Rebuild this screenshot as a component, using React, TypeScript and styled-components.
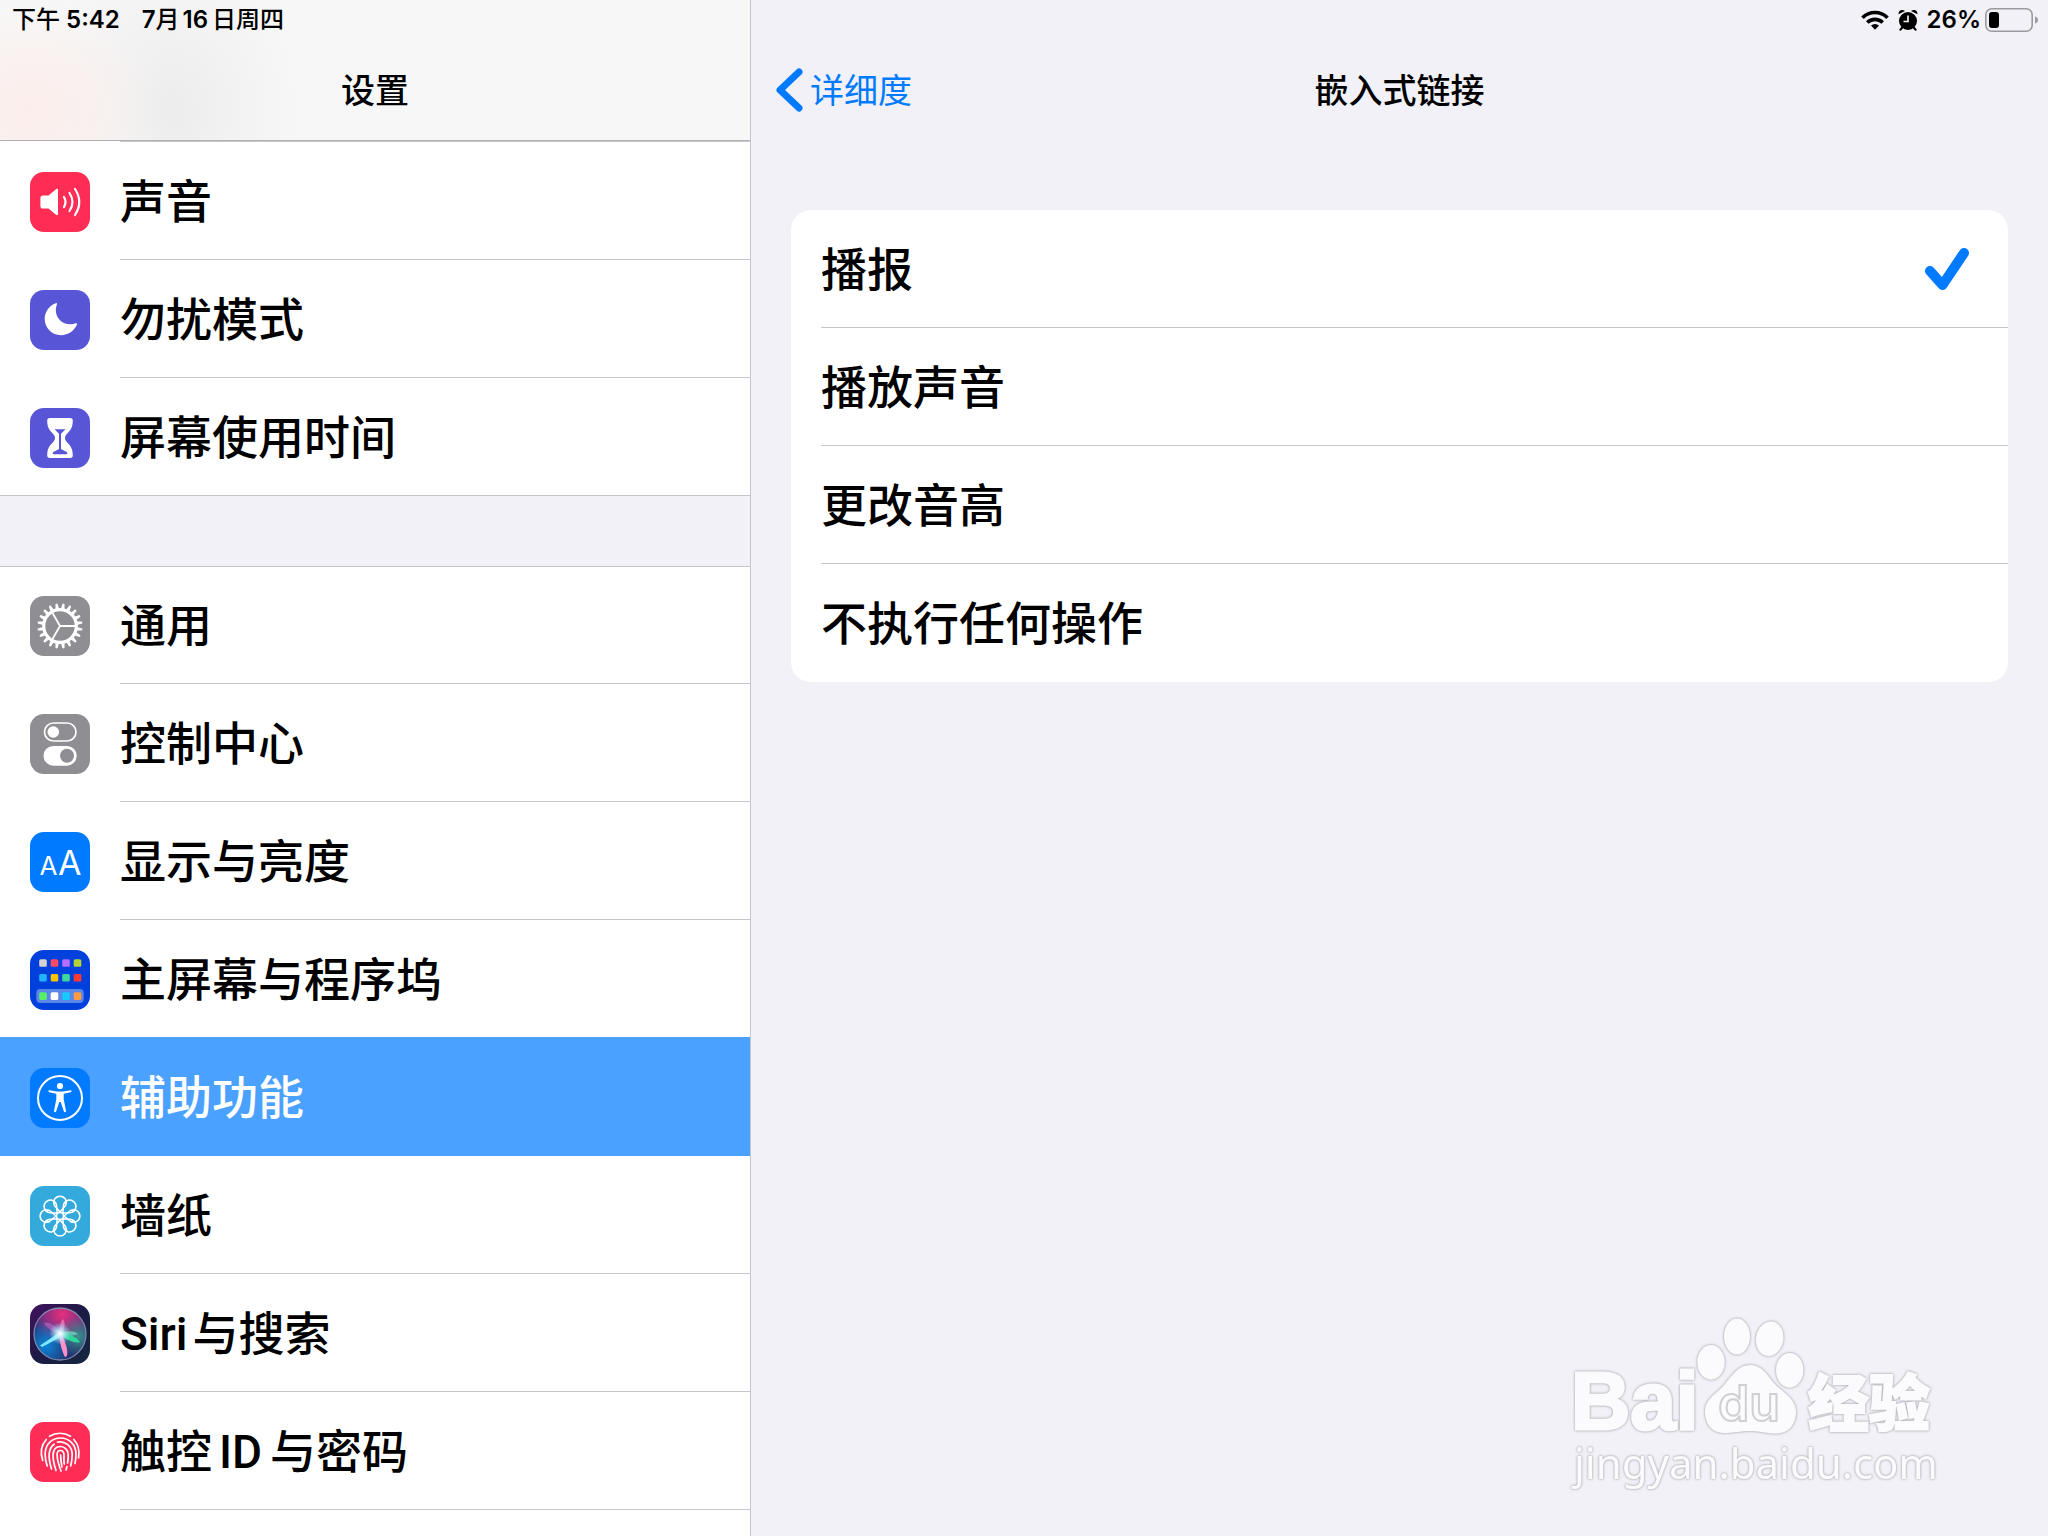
import React from "react";
import styled, { createGlobalStyle, css } from "styled-components";

const GlobalStyle = createGlobalStyle`
  *, *::before, *::after { box-sizing: border-box; }
  body {
    margin: 0;
    background: #f2f1f7;
    color: #000;
    font-family: Inter, "Noto Sans CJK SC", sans-serif;
  }
`;

const Screen = styled.div`
  position: relative;
  display: flex;
  height: 100vh;
  overflow: hidden;
`;

const Sidebar = styled.aside`
  display: flex;
  flex-direction: column;
  flex: 0 0 751px;
  border-right: 1px solid #c6c6c8;
  background: #fff;
  overflow: hidden;
`;

const SidebarHeader = styled.header`
  flex: none;
  border-bottom: 1px solid #b2b2b4;
  background:
    radial-gradient(ellipse 150px 130px at 30px 110px, rgba(251, 237, 235, 1) 0%, rgba(251, 239, 237, 0.7) 40%, rgba(250, 243, 242, 0.2) 75%, rgba(250, 244, 243, 0) 100%),
    radial-gradient(ellipse 130px 160px at 170px 110px, rgba(236, 236, 236, 1) 0%, rgba(239, 239, 239, 0.7) 45%, rgba(246, 246, 246, 0) 100%),
    #f7f7f7;
`;

const StatusBar = styled.div<{ $end?: boolean }>`
  display: flex;
  align-items: center;
  justify-content: ${(p) => (p.$end ? "flex-end" : "flex-start")};
  height: 40px;
  padding: 0 10px 0 12px;
  font-size: 24px;
  font-weight: 600;
  line-height: 40px;
`;

const Clock = styled.time`
  margin-right: 22px;
  font-weight: 600;
`;

const Cjk = styled.span`
  font-weight: 500;
`;

const Day = styled.span`
  margin: 0 4px 0 3px;
`;

const NavBar = styled.div`
  display: grid;
  grid-template-columns: 1fr auto 1fr;
  align-items: center;
  height: 100px;
  padding: 0 24px;
`;

const Title = styled.h1`
  grid-column: 2;
  margin: 0;
  padding-top: 2px;
  font-size: 34px;
  font-weight: 500;
  line-height: 98px;
`;

const BackButton = styled.button`
  display: flex;
  align-items: center;
  justify-self: start;
  gap: 7px;
  padding: 0;
  border: 0;
  background: none;
  color: #007aff;
  font: inherit;
  font-size: 34px;
  line-height: 98px;
`;

const BackText = styled.span`
  padding-top: 2px;
`;

const PreviousRowEdge = styled.div`
  flex: none;
  height: 1px;
  margin-left: 120px;
  background: #c6c6c8;
`;

const List = styled.ul<{ $lined?: boolean }>`
  flex: none;
  margin: 0;
  padding: 0;
  list-style: none;
  background: #fff;
  ${(p) => p.$lined && css`
    box-shadow: inset 0 1px #c6c6c8;
  `}
`;

const GroupGap = styled.div`
  flex: none;
  height: 70px;
  background: #f2f1f7;
`;

const Row = styled.li`
  height: 118px;
`;

const RowLink = styled.a<{ $active?: boolean; $last?: boolean }>`
  display: flex;
  height: 118px;
  padding-left: 30px;
  gap: 30px;
  color: ${(p) => (p.$active ? "#fff" : "#000")};
  text-decoration: none;
  ${(p) => p.$active && css`
    background: #4ba1ff;
    box-shadow: 0 -1px #4ba1ff;
  `}
  ${(p) => p.$last && css`
    border-bottom: 1px solid #c6c6c8;
  `}
`;

const IconTile = styled.svg`
  flex: none;
  width: 60px;
  height: 60px;
  margin-top: 30px;
`;

const RowLabel = styled.span<{ $line?: boolean }>`
  flex: 1;
  border-bottom: ${(p) => (p.$line ? "1px solid #c6c6c8" : "0")};
  font-size: 46px;
  font-weight: 500;
  line-height: 118px;
  white-space: nowrap;
`;

const Latin = styled.span<{ $lead: boolean }>`
  margin: 0 ${(p) => (p.$lead ? "5px" : "8px")} 0 ${(p) => (p.$lead ? "0" : "7px")};
  font-family: Roboto, sans-serif;
`;

const Detail = styled.main`
  flex: 1;
  min-width: 0;
`;

const StatusIcons = styled.div`
  display: flex;
  align-items: center;
  gap: 9px;
`;

const StatusSvg = styled.svg`
  display: block;
`;

const Battery = styled.span`
  display: flex;
  align-items: center;
  gap: 5px;
`;

const Card = styled.fieldset`
  margin: 70px 40px 0;
  padding: 0;
  border: 0;
  border-radius: 20px;
  background: #fff;
`;

const Option = styled.label`
  display: flex;
  align-items: center;
  height: 118px;
  margin-left: 30px;
  padding-right: 38px;
  border-bottom: 1px solid #c6c6c8;
  font-size: 46px;
  font-weight: 500;
  line-height: 116px;
  &:last-child { border-bottom-color: transparent; }
`;

const OptionText = styled.span`
  flex: 1;
  padding-top: 1px;
`;

const Radio = styled.input`
  appearance: none;
  width: 0;
  height: 0;
  margin: 0;
  & ~ svg { visibility: hidden; }
  &:checked ~ svg { visibility: visible; }
`;

const Watermark = styled.svg`
  position: absolute;
  right: 88px;
  bottom: 26px;
  width: 420px;
  height: 220px;
`;

const Halo = styled.g`
  filter: drop-shadow(0 0 1px #a8a8b0) drop-shadow(0 0 1px #d0d0d6);
`;

const Tile = ({ fill, children }: { fill: string; children: React.ReactNode }) => (
  <IconTile viewBox="0 0 60 60" aria-hidden="true">
    <rect width="60" height="60" rx="14" fill={fill} />
    {children}
  </IconTile>
);

const turns = (n: number) => Array.from({ length: n }, (_, i) => (360 / n) * i);

const SoundIcon = () => (
  <Tile fill="#ff2d55">
    <path d="M13 23.5h5.5l7.500-6.300c1.100-.7 2-.3 2 1v23.600c0 1.300-.9 1.700-2 1L18.500 36.500H13c-1.700 0-2.600-.9-2.600-2.600v-7.800c0-1.700.9-2.600 2.600-2.600z" fill="#fff" />
    <g fill="none" stroke="#fff" strokeWidth="2.200" strokeLinecap="round">
      <path d="M34 25q3 5 0 10" />
      <path d="M39.500 21q6 9 0 18" />
      <path d="M45 17q8.500 13 0 26" />
    </g>
  </Tile>
);

const MoonIcon = () => (
  <Tile fill="#5856d6">
    <path d="M25.800 13.200C19 15.600 14.700 22 14.700 29c0 9 7.300 16.200 16.300 16.200 7 0 13.400-4.200 16-10.600.4-1-.3-1.700-1.300-1.300-1.700.6-3.500 1-5.400 1-8.300 0-14.500-6.200-14.500-14.300 0-1.800.4-3.800 1.100-5.500.4-1-.2-1.600-1.100-1.300z" fill="#fff" />
  </Tile>
);

const HourglassIcon = () => (
  <Tile fill="#5856d6">
    <path d="M20 10h20c2 0 2.800 1 2.800 2.700 0 6-2 9.300-5.300 12.600-1.700 1.700-2.500 3-2.500 4.700s.8 3 2.500 4.700c3.300 3.300 5.300 6.600 5.300 12.600 0 1.700-.8 2.700-2.800 2.700H20c-2 0-2.800-1-2.800-2.700 0-6 2-9.300 5.300-12.600 1.700-1.700 2.500-3 2.500-4.700s-.8-3-2.500-4.700c-3.300-3.300-5.300-6.600-5.300-12.600 0-1.700.8-2.700 2.800-2.700z" fill="#fff" />
    <path d="M24.500 21.200h11l-4.500 4.500V41l6 3.200q1 2-.5 2h-13q-1.500 0-.5-2l6-3.200V25.700z" fill="#5856d6" />
  </Tile>
);

const GearIcon = () => (
  <Tile fill="#8e8e93">
    <g fill="#fff">
      {turns(20).map((a) => (
        <path key={a} d="M28.200 13l.7-5.200q1.100-1.200 2.200 0l.7 5.200z" transform={`rotate(${a + 9} 30 30)`} />
      ))}
    </g>
    <circle cx="30" cy="30" r="16.300" fill="none" stroke="#fff" strokeWidth="3.200" />
    <path d="M30 30h15M30 30l-7.500-13M30 30l-7.500 13" stroke="#fff" strokeWidth="1.800" />
  </Tile>
);

const ControlIcon = () => (
  <Tile fill="#8e8e93">
    <rect x="14.500" y="9" width="31.500" height="18" rx="9" fill="none" stroke="#fff" strokeWidth="1.700" />
    <circle cx="23.300" cy="18" r="5.800" fill="#fff" />
    <rect x="13.500" y="32" width="33.200" height="19.700" rx="9.800" fill="#fff" />
    <circle cx="37" cy="41.800" r="7" fill="#8e8e93" />
  </Tile>
);

const TextSizeIcon = () => (
  <Tile fill="#007aff">
    <g fill="#fff" fontFamily="Inter, sans-serif">
      <text x="18.500" y="42.500" fontSize="26" textAnchor="middle">A</text>
      <text x="39.800" y="42.500" fontSize="34" textAnchor="middle">A</text>
    </g>
  </Tile>
);

const homeColors = [
  ["#d6d2cf", "#ff4a63", "#b56dff", "#b4d334"],
  ["#1fb4ff", "#ffc400", "#3fd69c", "#ff3830"],
  ["#57ef6a", "#ffffff", "#14cbff", "#ff9a45"],
];

const HomeIcon = () => (
  <Tile fill="#0040dd">
    <rect x="6.300" y="39" width="47.400" height="14" rx="4" fill="#fff" opacity=".36" />
    {homeColors.map((line, r) =>
      line.map((c, i) => (
        <rect key={c} x={9.2 + i * 11.5} y={[9.200, 24, 42.300][r]} width="7.600" height="7.600" rx="1.500" fill={c} />
      ))
    )}
  </Tile>
);

const AccessibilityIcon = () => (
  <Tile fill="#007aff">
    <circle cx="30" cy="30" r="22" fill="none" stroke="#fff" strokeWidth="2" />
    <circle cx="30" cy="18" r="3.100" fill="#fff" />
    <path d="M19.500 22.300l7.500 1.200h6l7.500-1.200c1.300 0 1.400 1.600.2 1.900l-7 1.600v5.500l2.300 11.500c.2 1.500-1.600 2-2.200.5L30.700 34h-1.400l-3.100 9.300c-.6 1.500-2.400 1-2.200-.5l2.300-11.500v-5.500l-7-1.600c-1.200-.3-1.100-1.900-.1-1.900z" fill="#fff" />
  </Tile>
);

const WallpaperIcon = () => (
  <Tile fill="#34aadc">
    <g fill="none" stroke="#fff" strokeWidth="1.500">
      {turns(8).map((a) => (
        <path key={a} d="M30 26l-5.500-6.500a6.300 6.300 0 1 1 11 0z" transform={`rotate(${a} 30 30)`} />
      ))}
      <circle cx="30" cy="30" r="3.500" />
    </g>
  </Tile>
);

const SiriIcon = () => (
  <IconTile viewBox="0 0 60 60" aria-hidden="true">
    <defs>
      <linearGradient id="siriTile" x1="0" y1="0" x2="1" y2="1">
        <stop offset="0" stopColor="#43115f" />
        <stop offset=".5" stopColor="#1c1a45" />
        <stop offset="1" stopColor="#14283f" />
      </linearGradient>
      <radialGradient id="siriPink" cx=".55" cy=".12" r=".6">
        <stop offset="0" stopColor="#e8307c" />
        <stop offset=".6" stopColor="#a02d86" stopOpacity=".8" />
        <stop offset="1" stopColor="#a02d86" stopOpacity="0" />
      </radialGradient>
      <radialGradient id="siriBlue" cx=".22" cy=".72" r=".5">
        <stop offset="0" stopColor="#0a86d8" />
        <stop offset="1" stopColor="#0a86d8" stopOpacity="0" />
      </radialGradient>
      <radialGradient id="siriTeal" cx=".85" cy=".55" r=".4">
        <stop offset="0" stopColor="#3a8f8c" />
        <stop offset="1" stopColor="#3a8f8c" stopOpacity="0" />
      </radialGradient>
      <radialGradient id="siriGlow">
        <stop offset="0" stopColor="#fff" />
        <stop offset=".35" stopColor="#cdf6ff" stopOpacity=".8" />
        <stop offset="1" stopColor="#8fe6ff" stopOpacity="0" />
      </radialGradient>
    </defs>
    <rect width="60" height="60" rx="14" fill="url(#siriTile)" />
    <circle cx="30" cy="30" r="26" fill="#24306e" />
    <circle cx="30" cy="30" r="26" fill="url(#siriPink)" />
    <circle cx="30" cy="30" r="26" fill="url(#siriBlue)" />
    <circle cx="30" cy="30" r="26" fill="url(#siriTeal)" />
    <circle cx="30" cy="30" r="26" fill="none" stroke="#8e9ab8" strokeWidth="1.300" opacity=".8" />
    <path d="M30 30C22 28 15 22 14 19c6-1 14 4 16 11z" fill="#d87ad0" opacity=".45" />
    <path d="M30 30c-1-6 0-12 3-15 3 4 2 11-3 15z" fill="#ff9fd8" opacity=".55" />
    <path d="M30 30c6-3 13-4 18 0-4 2-12 3-18 0z" fill="#7df0c8" opacity=".6" />
    <path d="M30 28L10 41.500l2 1.500 19-10z" fill="#7fe6ff" />
    <path d="M30 28c8 1 17 5 20 10-4 2-13-2-20-7z" fill="#2fd69a" />
    <path d="M28.500 28c1 8 3 19 6.500 25 3 0 2.500-6 1.500-10-1.500-5-3.500-11-5.500-15z" fill="#ff8fc8" />
    <circle cx="30" cy="29.500" r="11" fill="url(#siriGlow)" />
  </IconTile>
);

const TouchIdIcon = () => (
  <Tile fill="#ff2d55">
    <g fill="none" stroke="#fff" strokeWidth="1.700" strokeLinecap="round">
      <path d="M19.500 14.300a20 20 0 0 1 21 0" />
      <path d="M12.700 38.500c-2.600-8-1.500-15.500 3.600-21" />
      <path d="M43.800 17.500c4 4.200 6 11 4.800 18.300" />
      <path d="M17.200 44c-1.500-5-2.400-8.500-2-13.500C16 21.500 22.500 16 30.500 16c9 0 15.500 7 15.500 16 0 3.500-.4 6.500-1 9.500" />
      <path d="M21.500 47c-1.800-6-2.800-10-2.300-15.500.5-4 2-7.200 5-9.300M27.500 20.200c8-1.600 14.500 4.300 14.700 11.800 0 4.500-.4 8-1.500 12" />
      <path d="M26 48.500c-2-6-3.200-11-2.900-16 .3-5 3.200-8 7.300-8 4.500 0 7.600 3.500 7.800 8 .1 3-.2 6-.6 8.500M36.900 44.500l-.8 3.500" />
      <path d="M31 49c-2.200-6-4-12-3.900-16.500 0-2.500 1.300-4 3.300-4 2.200 0 3.500 1.700 3.600 4.500 0 4-.2 6 .2 9" />
      <path d="M30.600 33c.2 5 .8 9 1.300 12" />
    </g>
  </Tile>
);

const menuTop = [
  { label: "声音", Icon: SoundIcon },
  { label: "勿扰模式", Icon: MoonIcon },
  { label: "屏幕使用时间", Icon: HourglassIcon },
];

const menuMain = [
  { label: "通用", Icon: GearIcon },
  { label: "控制中心", Icon: ControlIcon },
  { label: "显示与亮度", Icon: TextSizeIcon },
  { label: "主屏幕与程序坞", Icon: HomeIcon },
  { label: "辅助功能", Icon: AccessibilityIcon },
  { label: "墙纸", Icon: WallpaperIcon },
  { label: "Siri与搜索", Icon: SiriIcon },
  { label: "触控ID与密码", Icon: TouchIdIcon },
];

const options = ["播报", "播放声音", "更改音高", "不执行任何操作"];

// Latin words inside a Chinese label get their own face and side spacing.
const mixed = (label: string) =>
  label
    .split(/([A-Za-z]+)/)
    .filter(Boolean)
    .map((part, i) => (/^[A-Za-z]/.test(part) ? <Latin key={part} $lead={i === 0}>{part}</Latin> : part));

export default function App() {
  const [choice, setChoice] = React.useState(options[0]);
  const active = "辅助功能";
  return (
    <>
      <GlobalStyle />
      <Screen>
        <Sidebar>
          <SidebarHeader>
            <StatusBar>
              <Clock><Cjk>下午</Cjk> 5:42</Clock>
              <span>7<Cjk>月</Cjk><Day>16</Day><Cjk>日周四</Cjk></span>
            </StatusBar>
            <NavBar>
              <Title>设置</Title>
            </NavBar>
          </SidebarHeader>
          <PreviousRowEdge />
          <List>
            {menuTop.map(({ label, Icon }, i) => {
              const last = i === menuTop.length - 1;
              return (
                <Row key={label}>
                  <RowLink href="#" $last={last}>
                    <Icon />
                    <RowLabel $line={!last}>{label}</RowLabel>
                  </RowLink>
                </Row>
              );
            })}
          </List>
          <GroupGap />
          <List $lined>
            {menuMain.map(({ label, Icon }, i) => (
              <Row key={label}>
                <RowLink href="#" $active={label === active}>
                  <Icon />
                  <RowLabel $line={label !== active && menuMain[i + 1]?.label !== active}>{mixed(label)}</RowLabel>
                </RowLink>
              </Row>
            ))}
          </List>
        </Sidebar>
        <Detail>
          <StatusBar $end>
            <StatusIcons>
              <StatusSvg width="28" height="20" viewBox="0 0 28 20" aria-label="Wi-Fi">
                <g fill="none" stroke="#000" strokeWidth="3.600">
                  <path d="M1.500 7.700a17.700 17.700 0 0 1 25 0" />
                  <path d="M6.300 12.500a11 11 0 0 1 15.400 0" />
                </g>
                <path d="M14 19.800l-4-4.200a5.800 5.800 0 0 1 8 0z" />
              </StatusSvg>
              <StatusSvg width="20" height="22" viewBox="0 0 20 22" aria-label="闹钟">
                <circle cx="10" cy="12" r="9" />
                <path d="M4.200 18.500L2.500 20.600M15.800 18.500l1.700 2.100" stroke="#000" strokeWidth="2.200" strokeLinecap="round" />
                <path d="M.6 5.300C.2 3 1.800.9 4 .9c1.200 0 2.200.4 3 1.100zM19.400 5.300C19.800 3 18.200.9 16 .9c-1.200 0-2.200.4-3 1.100z" />
                <path d="M10 6.500V12.500H5.500" fill="none" stroke="#f2f1f7" strokeWidth="1.700" />
              </StatusSvg>
              <span>26%</span>
            </StatusIcons>
            <Battery>
              <StatusSvg width="57" height="24" viewBox="1 0 57 24" aria-label="电量">
                <rect x="5.800" y=".8" width="46.400" height="22.400" rx="6" fill="none" stroke="#9b9a9f" strokeWidth="1.600" />
                <rect x="9" y="4" width="10" height="16" rx="3" />
                <path d="M55 8.500q3 1 3 3.500t-3 3.500z" fill="#9b9a9f" />
              </StatusSvg>
            </Battery>
          </StatusBar>
          <NavBar>
            <BackButton type="button">
              <StatusSvg width="28" height="44" viewBox="0 0 28 44" aria-hidden="true">
                <path d="M24 4L5 22l19 18" fill="none" stroke="#007aff" strokeWidth="7" strokeLinecap="round" strokeLinejoin="round" />
              </StatusSvg>
              <BackText>详细度</BackText>
            </BackButton>
            <Title as="h2">嵌入式链接</Title>
          </NavBar>
          <Card aria-label="嵌入式链接">
            {options.map((o) => (
              <Option key={o}>
                <OptionText>{o}</OptionText>
                <Radio type="radio" name="link" checked={choice === o} onChange={() => setChoice(o)} />
                <StatusSvg width="46" height="44" viewBox="0 0 46 44" aria-hidden="true">
                  <path d="M6 24l12.500 14L40 6" fill="none" stroke="#007aff" strokeWidth="10" strokeLinecap="round" strokeLinejoin="round" />
                </StatusSvg>
              </Option>
            ))}
          </Card>
        </Detail>
        <Watermark viewBox="0 0 420 220" aria-label="Baidu 经验">
          <Halo fill="#fbfbfd">
            <ellipse cx="197" cy="46.500" rx="13" ry="18" />
            <ellipse cx="229.700" cy="48.700" rx="13.700" ry="17.400" transform="rotate(10 229.700 48.700)" />
            <ellipse cx="171" cy="72.300" rx="13.700" ry="17.400" />
            <ellipse cx="249.700" cy="80.300" rx="13.700" ry="17.400" />
            <path d="M210 75c10 0 16 7 23 17 8 10 23 15 23 30 0 13-8 21.500-20 21.500-10 0-16-2.500-26-2.500s-16 2-26 2c-12 0-19-9-19-21 0-14 12-18 20-28 8-10 14-19 25-19z" />
            <g stroke="#fbfbfd">
              <text x="31" y="139" fontSize="82" fontWeight="700" strokeWidth="3" fontFamily='"Liberation Sans", sans-serif'>Bai</text>
              <text x="268" y="136" fontSize="61" fontWeight="900" strokeWidth="2" fontFamily='"Noto Sans CJK SC", sans-serif'>经验</text>
            </g>
            <text x="34" y="189" fontSize="42" fontFamily='"Noto Sans", sans-serif'>jingyan.baidu.com</text>
          </Halo>
          <text x="178" y="131" fontSize="50" fontWeight="600" fontFamily="Inter, sans-serif" fill="#fbfbfd" stroke="#cfcfd4" strokeWidth="2">du</text>
        </Watermark>
      </Screen>
    </>
  );
}
